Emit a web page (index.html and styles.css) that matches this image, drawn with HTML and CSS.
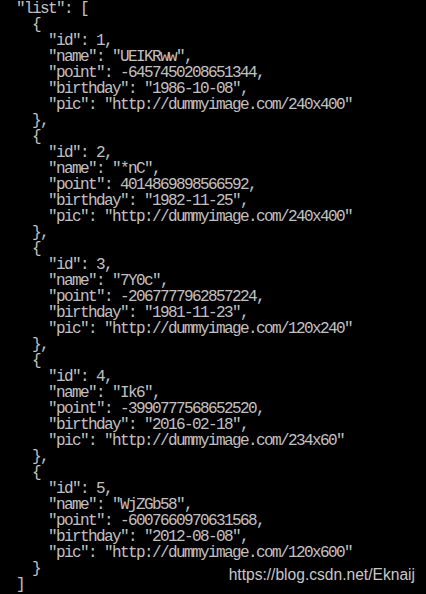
FILE: index.html
```html
<!DOCTYPE html>
<html>
<head>
<meta charset="utf-8">
<link rel="stylesheet" href="styles.css">
</head>
<body>
<div class="console">
<pre class="output">  "list": [
    {
      "id": 1,
      "name": "UEIKRww",
      "point": -6457450208651344,
      "birthday": "1986-10-08",
      "pic": "http://dummyimage.com/240x400"
    },
    {
      "id": 2,
      "name": "*nC",
      "point": 4014869898566592,
      "birthday": "1982-11-25",
      "pic": "http://dummyimage.com/240x400"
    },
    {
      "id": 3,
      "name": "7Y0c",
      "point": -2067777962857224,
      "birthday": "1981-11-23",
      "pic": "http://dummyimage.com/120x240"
    },
    {
      "id": 4,
      "name": "Ik6",
      "point": -3990777568652520,
      "birthday": "2016-02-18",
      "pic": "http://dummyimage.com/234x60"
    },
    {
      "id": 5,
      "name": "WjZGb58",
      "point": -6007660970631568,
      "birthday": "2012-08-08",
      "pic": "http://dummyimage.com/120x600"
    }
  ]</pre>
<div class="watermark">https://blog.csdn.net/Eknaij</div>
</div>
</body>
</html>
```
FILE: styles.css
```css
html, body {
  margin: 0;
  padding: 0;
  background: #000;
}
.console {
  position: relative;
  width: 426px;
  height: 594px;
  overflow: hidden;
  background: #000;
}
.output {
  margin: 0;
  padding: 0;
  margin-top: 1px;
  font-family: "Liberation Mono", "DejaVu Sans Mono", monospace;
  font-size: 16px;
  letter-spacing: -1.6px;
  line-height: 16px;
  color: #c0c0c0;
}
.watermark {
  position: absolute;
  right: 11px;
  bottom: 11px;
  font-family: "Liberation Sans", Arial, sans-serif;
  font-size: 15.6px;
  line-height: 17px;
  color: #c8c8c8;
}
```
